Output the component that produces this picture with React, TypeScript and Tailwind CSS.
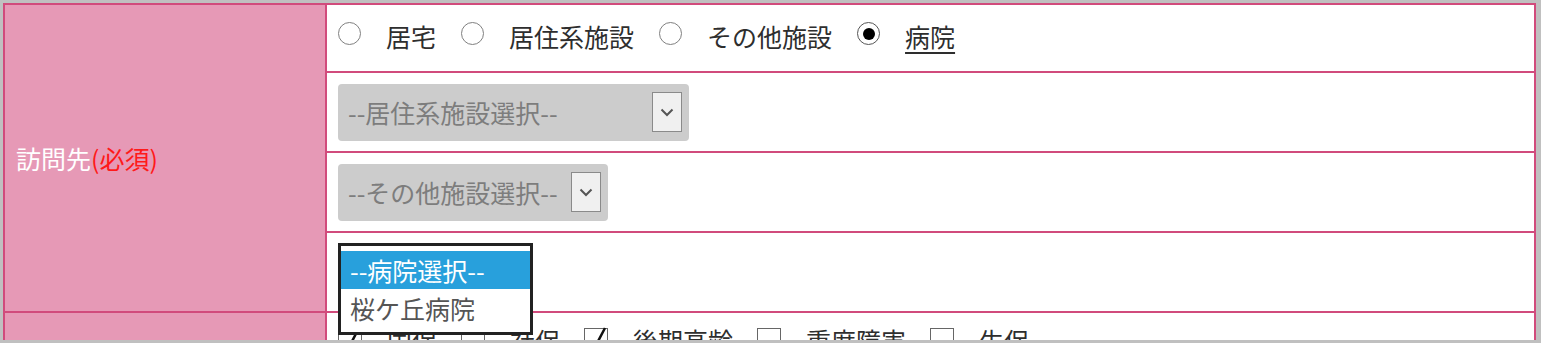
import React from 'react';

// Visit destination form row (訪問先) with an open hospital dropdown

const radios = [
  { label: '居宅', checked: false },
  { label: '居住系施設', checked: false },
  { label: 'その他施設', checked: false },
  { label: '病院', checked: true },
];

const insurances = [
  { label: '国保', checked: true },
  { label: '社保', checked: false },
  { label: '後期高齢', checked: true },
  { label: '重度障害', checked: false },
  { label: '生保', checked: false },
];

const Radio = ({ checked }: { checked: boolean }) => (
  <span
    className={
      checked
        ? 'mb-[5px] mr-[25px] flex h-[23px] w-[23px] shrink-0 items-center justify-center rounded-full border-[1.5px] border-[#555555] bg-white'
        : 'mb-[5px] mr-[25px] flex h-[23px] w-[23px] shrink-0 items-center justify-center rounded-full border-[1.5px] border-[#808080] bg-white'
    }
  >
    {checked && <span className="h-[12px] w-[12px] rounded-full bg-black" />}
  </span>
);

const Checkbox = ({ checked }: { checked: boolean }) => (
  <span className="relative mr-[25px] h-[24px] w-[24px] shrink-0 border-[1.5px] border-[#666666] bg-white">
    {checked && (
      <svg className="absolute left-0 top-0 overflow-visible" width="24" height="24" viewBox="0 0 24 24">
        <path d="M5 12 L10 18 L20 -1" fill="none" stroke="#111" strokeWidth="2.5" />
      </svg>
    )}
  </span>
);

const Chevron = () => (
  <svg width="14" height="9" viewBox="0 0 14 9">
    <polyline points="1.5,1.5 7,7 12.5,1.5" fill="none" stroke="#555" strokeWidth="2" />
  </svg>
);

const FakeSelect = ({ text, width }: { text: string; width: string }) => (
  <div className={`flex h-[57px] items-center justify-between rounded-[4px] bg-[#cccccc] pl-[10px] pr-[7px] ${width}`}>
    <span className="whitespace-nowrap text-[#7d7d7d]">{text}</span>
    <span className="flex h-[40px] w-[30px] shrink-0 items-center justify-center border-[1.5px] border-[#8a8a8a] bg-[#f0f0f0]">
      <Chevron />
    </span>
  </div>
);

export default function App() {
  return (
    <div className="h-[343px] w-[1541px] overflow-hidden bg-[#c0c0c0] pl-[3px] pr-[5px] pt-[3px] font-['Noto_Sans_CJK_JP',sans-serif] text-[25px] leading-[36px] text-[#2e2e2e]">
      <div className="h-[337px] overflow-hidden border-2 border-b-0 border-[#d14b7c] bg-white">
        <div className="flex border-b-2 border-[#d14b7c]">
          <div className="flex w-[322px] shrink-0 items-center border-r-2 border-[#d14b7c] bg-[#e699b6] pl-[11px]">
            <span className="text-white">訪問先</span>
            <span className="text-[#ff1a1a]">(必須)</span>
          </div>

          <div className="flex flex-1 flex-col">
            {/* radio choices */}
            <div className="flex h-[68px] items-center border-b-2 border-[#d14b7c] pb-[4px] pl-[11px]">
              {radios.map((r) => (
                <React.Fragment key={r.label}>
                  <Radio checked={r.checked} />
                  <span
                    className={
                      r.checked
                        ? 'mr-[25px] whitespace-nowrap underline decoration-[1.5px] underline-offset-[5px]'
                        : 'mr-[25px] whitespace-nowrap'
                    }
                  >
                    {r.label}
                  </span>
                </React.Fragment>
              ))}
            </div>

            <div className="flex h-[80px] items-center border-b-2 border-[#d14b7c] pl-[11px]">
              <FakeSelect text="--居住系施設選択--" width="w-[351px]" />
            </div>

            <div className="flex h-[80px] items-center border-b-2 border-[#d14b7c] pl-[11px]">
              <FakeSelect text="--その他施設選択--" width="w-[270px]" />
            </div>

            <div className="relative h-[78px]">
              {/* open hospital list */}
              <div className="absolute left-[11px] top-[10px] z-10 h-[92px] w-[195px] border-[3px] border-[#222222] bg-white pt-[5px]">
                <div className="h-[38px] bg-[#28a0dc] pl-[9px] leading-[38px] text-white">--病院選択--</div>
                <div className="h-[38px] pl-[9px] leading-[38px] text-[#555555]">桜ケ丘病院</div>
              </div>
            </div>
          </div>
        </div>

        <div className="flex">
          <div className="h-[80px] w-[322px] shrink-0 border-r-2 border-[#d14b7c] bg-[#e699b6]" />
          <div className="flex flex-1 items-start pl-[11px] pt-[9px]">
            {insurances.map((c) => (
              <div key={c.label} className="flex items-center">
                <Checkbox checked={c.checked} />
                <span className="mr-[24px] whitespace-nowrap">{c.label}</span>
              </div>
            ))}
          </div>
        </div>
      </div>
    </div>
  );
}
